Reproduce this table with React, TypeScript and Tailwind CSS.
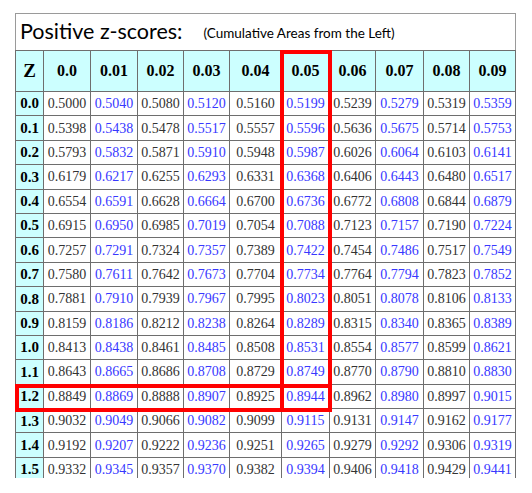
import React from "react"

const cols = ["0.0", "0.01", "0.02", "0.03", "0.04", "0.05", "0.06", "0.07", "0.08", "0.09"]
const widths = [47, 47, 46, 46, 52, 48, 46, 48, 46, 46]

const rows: [string, string[]][] = [
  ["0.0", ["0.5000", "0.5040", "0.5080", "0.5120", "0.5160", "0.5199", "0.5239", "0.5279", "0.5319", "0.5359"]],
  ["0.1", ["0.5398", "0.5438", "0.5478", "0.5517", "0.5557", "0.5596", "0.5636", "0.5675", "0.5714", "0.5753"]],
  ["0.2", ["0.5793", "0.5832", "0.5871", "0.5910", "0.5948", "0.5987", "0.6026", "0.6064", "0.6103", "0.6141"]],
  ["0.3", ["0.6179", "0.6217", "0.6255", "0.6293", "0.6331", "0.6368", "0.6406", "0.6443", "0.6480", "0.6517"]],
  ["0.4", ["0.6554", "0.6591", "0.6628", "0.6664", "0.6700", "0.6736", "0.6772", "0.6808", "0.6844", "0.6879"]],
  ["0.5", ["0.6915", "0.6950", "0.6985", "0.7019", "0.7054", "0.7088", "0.7123", "0.7157", "0.7190", "0.7224"]],
  ["0.6", ["0.7257", "0.7291", "0.7324", "0.7357", "0.7389", "0.7422", "0.7454", "0.7486", "0.7517", "0.7549"]],
  ["0.7", ["0.7580", "0.7611", "0.7642", "0.7673", "0.7704", "0.7734", "0.7764", "0.7794", "0.7823", "0.7852"]],
  ["0.8", ["0.7881", "0.7910", "0.7939", "0.7967", "0.7995", "0.8023", "0.8051", "0.8078", "0.8106", "0.8133"]],
  ["0.9", ["0.8159", "0.8186", "0.8212", "0.8238", "0.8264", "0.8289", "0.8315", "0.8340", "0.8365", "0.8389"]],
  ["1.0", ["0.8413", "0.8438", "0.8461", "0.8485", "0.8508", "0.8531", "0.8554", "0.8577", "0.8599", "0.8621"]],
  ["1.1", ["0.8643", "0.8665", "0.8686", "0.8708", "0.8729", "0.8749", "0.8770", "0.8790", "0.8810", "0.8830"]],
  ["1.2", ["0.8849", "0.8869", "0.8888", "0.8907", "0.8925", "0.8944", "0.8962", "0.8980", "0.8997", "0.9015"]],
  ["1.3", ["0.9032", "0.9049", "0.9066", "0.9082", "0.9099", "0.9115", "0.9131", "0.9147", "0.9162", "0.9177"]],
  ["1.4", ["0.9192", "0.9207", "0.9222", "0.9236", "0.9251", "0.9265", "0.9279", "0.9292", "0.9306", "0.9319"]],
  ["1.5", ["0.9332", "0.9345", "0.9357", "0.9370", "0.9382", "0.9394", "0.9406", "0.9418", "0.9429", "0.9441"]],
]

export default function App() {
  return (
    <div className="w-[532px] h-[493px] bg-white pl-[15px] pt-[13px]">
      <div className="relative w-[501px] h-[465px] overflow-hidden">
        <div className="h-[37px] border border-b-0 border-[#9a9a9a] flex items-center pl-[4px] gap-[21px]">
          <span className="text-[21.5px] text-black leading-none [font-family:Lato,'Open_Sans',sans-serif]">
            Positive z-scores:
          </span>
          <span className="text-[13.5px] text-black leading-none mt-[3px] [font-family:Lato,'Open_Sans',sans-serif]">
            (Cumulative Areas from the Left)
          </span>
        </div>
        <table className="table-fixed border-collapse w-[501px] [font-family:'Liberation_Serif',serif]">
          <colgroup>
            <col style={{ width: 28 }} />
            {widths.map((w, i) => (
              <col key={i} style={{ width: w }} />
            ))}
          </colgroup>
          <thead>
            <tr className="h-[41px] bg-[#ccffff]">
              <th className="border border-[#6e6e6e] text-[19px] font-bold text-black p-0">Z</th>
              {cols.map((c) => (
                <th key={c} className="border border-[#6e6e6e] text-[16px] font-bold text-black p-0">
                  {c}
                </th>
              ))}
            </tr>
          </thead>
          <tbody>
            {rows.map(([z, vals]) => (
              <tr key={z} className="h-[24.4px]">
                <td className="border border-[#6e6e6e] bg-[#ccffff] text-[15px] font-bold text-black text-center p-0">
                  {z}
                </td>
                {vals.map((v, i) => (
                  <td
                    key={i}
                    className={
                      "border border-[#6e6e6e] text-[14px] text-center p-0 " +
                      (i % 2 === 1 ? "text-[#3838ff]" : "text-[#333333]")
                    }
                  >
                    {v}
                  </td>
                ))}
              </tr>
            ))}
          </tbody>
        </table>
        {/* red highlight boxes */}
        <div className="absolute left-[265px] top-[37px] w-[52px] h-[362px] border-4 border-[#ff0000]" />
        <div className="absolute left-0 top-[371px] w-[317px] h-[28px] border-4 border-[#ff0000]" />
      </div>
    </div>
  )
}
